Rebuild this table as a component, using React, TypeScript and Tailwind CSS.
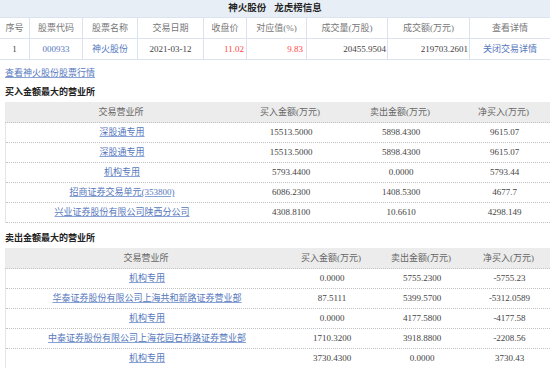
const fontStack = "font-['Liberation_Serif','Noto_Sans_CJK_SC',serif]";

const topHeaders = ["序号", "股票代码", "股票名称", "交易日期", "收盘价", "对应值(%)", "成交量(万股)", "成交额(万元)", "查看详情"];

const buyRows = [
  ["深股通专用", "15513.5000", "5898.4300", "9615.07"],
  ["深股通专用", "15513.5000", "5898.4300", "9615.07"],
  ["机构专用", "5793.4400", "0.0000", "5793.44"],
  ["招商证券交易单元(353800)", "6086.2300", "1408.5300", "4677.7"],
  ["兴业证券股份有限公司陕西分公司", "4308.8100", "10.6610", "4298.149"],
];

const sellRows = [
  ["机构专用", "0.0000", "5755.2300", "-5755.23"],
  ["华泰证券股份有限公司上海共和新路证券营业部", "87.5111", "5399.5700", "-5312.0589"],
  ["机构专用", "0.0000", "4177.5800", "-4177.58"],
  ["中泰证券股份有限公司上海花园石桥路证券营业部", "1710.3200", "3918.8800", "-2208.56"],
  ["机构专用", "3730.4300", "0.0000", "3730.43"],
];

function SeatTable({ rows, cols }: { rows: string[][]; cols: string }) {
  return (
    <div className="ml-[5px]">
      <div className={`grid ${cols} h-[21px] items-center bg-[#ececec] border-b border-dotted border-[#c2c2c2] text-[#666]`}>
        <div className="text-center">交易营业所</div>
        <div className="text-center">买入金额(万元)</div>
        <div className="text-center">卖出金额(万元)</div>
        <div className="text-center">净买入(万元)</div>
      </div>
      <div className="border-l border-[#e6e6e6]">
        {rows.map((r, i) => (
          <div key={i} className={`grid ${cols} h-[20px] items-center border-b border-dotted border-[#c2c2c2]`}>
            <div className="text-center">
              <span className="text-[#5577bd] underline decoration-[#8aa3d6]">{r[0]}</span>
            </div>
            <div className="text-center">{r[1]}</div>
            <div className="text-center">{r[2]}</div>
            <div className="text-center">{r[3]}</div>
          </div>
        ))}
      </div>
    </div>
  );
}

export default function App() {
  const topCols = "grid-cols-[30px_53px_55px_66px_43px_60px_81px_82px_80px]";
  return (
    <div className={`w-[550px] h-[368px] overflow-hidden bg-white text-[9px] leading-none text-[#444] ${fontStack}`}>
      {/* Top summary */}
      <div className="flex h-[18px] items-center justify-center gap-[8px] bg-[#e8eef5] border-b border-[#dbe4ee] text-[9.5px] font-bold text-[#222]">
        <span>神火股份</span>
        <span>龙虎榜信息</span>
      </div>
      <div className={`grid ${topCols} h-[21px] border-b border-[#dbe4ee] text-[#777]`}>
        {topHeaders.map((h, i) => (
          <div key={h} className={`flex items-center justify-center ${i < 8 ? "border-r border-[#dbe4ee]" : ""}`}>{h}</div>
        ))}
      </div>
      <div className={`grid ${topCols} h-[21px] border-b border-[#dbe4ee]`}>
        <div className="flex items-center justify-center border-r border-[#dbe4ee]">1</div>
        <div className="flex items-center justify-center border-r border-[#dbe4ee] text-[#5577bd]">000933</div>
        <div className="flex items-center justify-center border-r border-[#dbe4ee] text-[#5577bd]">神火股份</div>
        <div className="flex items-center justify-center border-r border-[#dbe4ee]">2021-03-12</div>
        <div className="flex items-center justify-end pr-[2px] border-r border-[#dbe4ee] text-[#ff4545]">11.02</div>
        <div className="flex items-center justify-end pr-[3px] border-r border-[#dbe4ee] text-[#ff4545]">9.83</div>
        <div className="flex items-center justify-end pr-[1px] border-r border-[#dbe4ee]">20455.9504</div>
        <div className="flex items-center justify-end pr-[1px] border-r border-[#dbe4ee]">219703.2601</div>
        <div className="flex items-center justify-center text-[#5577bd]">关闭交易详情</div>
      </div>

      <div className="mt-[7px] h-[12px] px-[5px] flex items-center">
        <span className="text-[#5577bd] underline decoration-[#8aa3d6]">查看神火股份股票行情</span>
      </div>

      {/* Buy side */}
      <div className="mt-[7px] h-[12px] px-[5px] flex items-center font-bold text-[#222]">买入金额最大的营业所</div>
      <div className="mt-[4px]">
        <SeatTable rows={buyRows} cols="grid-cols-[232px_106px_114px_93px]" />
      </div>

      {/* Sell side */}
      <div className="mt-[9px] h-[12px] px-[5px] flex items-center font-bold text-[#222]">卖出金额最大的营业所</div>
      <div className="mt-[4px]">
        <SeatTable rows={sellRows} cols="grid-cols-[282px_88px_92px_83px]" />
      </div>
    </div>
  );
}
